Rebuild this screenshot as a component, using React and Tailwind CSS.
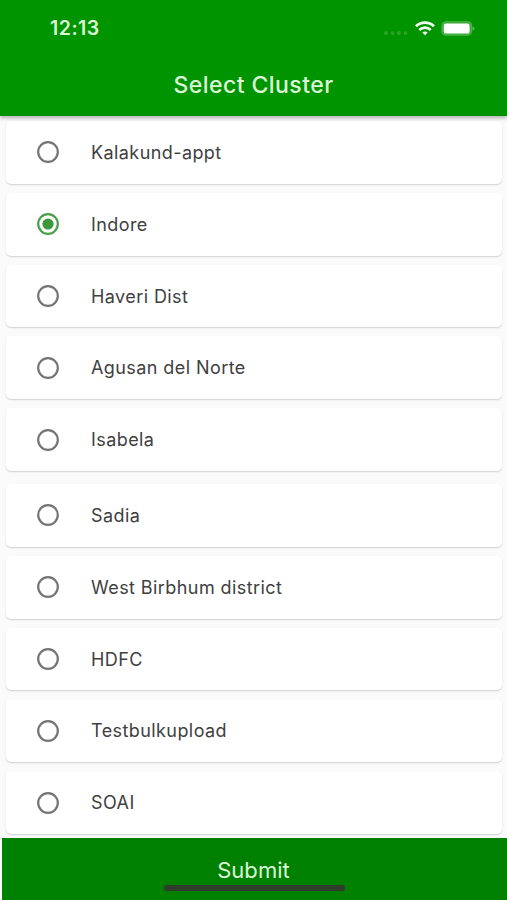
import React, { useState } from 'react';

const nearby = ['Kalakund-appt', 'Indore', 'Haveri Dist', 'Agusan del Norte', 'Isabela'];
const others = ['Sadia', 'West Birbhum district', 'HDFC', 'Testbulkupload', 'SOAI'];

const StatusBar = () => {
    return (
        <div className="flex h-[56px] items-center justify-between pl-[50px] pr-[32px]">
            <span className="pt-[2px] text-[19.5px] font-semibold leading-none tracking-[0.5px] text-[#dcf8d8]">12:13</span>
            <div className="flex items-center">
                {/* No signal dots */}
                <div className="mr-[8px] mt-[10px] flex gap-[3px]">
                    <span className="size-[3.5px] rounded-full bg-[#2fa329]" />
                    <span className="size-[3.5px] rounded-full bg-[#2fa329]" />
                    <span className="size-[3.5px] rounded-full bg-[#2fa329]" />
                    <span className="size-[3.5px] rounded-full bg-[#2fa329]" />
                </div>
                <svg className="mr-[6px] h-[15px] w-[20px]" viewBox="0 0 20 15" fill="none" stroke="#f2fff0" strokeWidth="2.8">
                    <path d="M1 5.2C6 .4 14 .4 19 5.2" />
                    <path d="M4.3 8.9C7.5 5.9 12.5 5.9 15.7 8.9" />
                    <path d="M10 14.3 7.3 11.6C8.8 10.2 11.2 10.2 12.7 11.6Z" fill="#f2fff0" stroke="none" />
                </svg>
                <svg className="h-[15px] w-[34px]" viewBox="0 0 34 15">
                    <rect x="1" y=".9" width="29.5" height="13.2" rx="4" fill="#3aa835" stroke="#4db347" strokeWidth="1.4" />
                    <rect x="2.8" y="2.6" width="25.8" height="10" rx="2.2" fill="#fff" />
                    <path d="M31.5 5.2Q33.6 6 33.6 7.5T31.5 9.8Z" fill="#55b74f" />
                </svg>
            </div>
        </div>
    );
};

const ClusterCard = ({ name, checked, onSelect }) => {
    return (
        <button
            onClick={onSelect}
            className="flex h-[62.8px] w-full shrink-0 items-center rounded-[5px] bg-white pl-[31px] text-left shadow-[0_1px_1.5px_rgba(0,0,0,0.17)]">
            <svg className="size-[22px]" viewBox="0 0 22 22" fill="none">
                <circle cx="11" cy="11" r="9.8" stroke={checked ? '#4a9f4a' : '#747474'} strokeWidth="2.2" />
                {checked && <circle cx="11" cy="11" r="5.6" fill="#3d983d" />}
            </svg>
            <span className="ml-[32px] pt-[1.4px] text-[18px] leading-none tracking-[0.42px] text-[#404040]">{name}</span>
        </button>
    );
};

const App = () => {
    const [selected, setSelected] = useState('Indore');

    const renderCards = (names) =>
        names.map((name) => (
            <ClusterCard key={name} name={name} checked={selected === name} onSelect={() => setSelected(name)} />
        ));

    return (
        <div className="flex h-[900px] w-full flex-col overflow-hidden bg-[#fafafa] font-['Inter',sans-serif]">
            {/* Header */}
            <header className="z-10 h-[116px] shrink-0 bg-[#009400] shadow-[0_2px_4px_rgba(0,0,0,0.3)]">
                <StatusBar />
                <h1 className="mt-[17px] text-center text-[23px] font-medium leading-6 tracking-[0.45px] text-[#dcf8d8]">Select Cluster</h1>
            </header>

            {/* Cluster list */}
            <main className="flex h-[722px] shrink-0 flex-col gap-[13px] pl-[6px] pr-[5px] pt-[5px]">
                <div className="flex flex-col gap-[9px]">{renderCards(nearby)}</div>
                <div className="flex flex-col gap-[9px]">{renderCards(others)}</div>
            </main>

            {/* Submit */}
            <footer className="z-10 ml-[2px] flex h-[62px] shrink-0 flex-col items-center bg-[#008000]">
                <button className="mt-[20px] pr-[2px] text-[22px] leading-6 tracking-[0.05px] text-[#dcf8d8]">Submit</button>
                <div className="mt-[3px] h-[6px] w-[181px] rounded-[2px] bg-[#303c2e]" />
            </footer>
        </div>
    );
};

export default App;
